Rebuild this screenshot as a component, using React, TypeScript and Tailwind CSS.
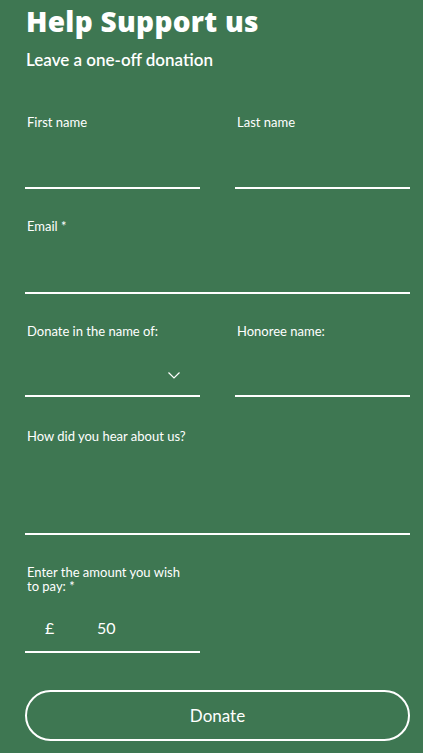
import React from "react";

const labelClass = "block pl-[2px] text-[13px] leading-4 text-white";
const lineInput =
  "block w-full bg-transparent border-0 border-b-2 border-white text-white outline-none";

function Field({
  label,
  height = "h-[59px]",
  children,
}: {
  label: string;
  height?: string;
  children?: React.ReactNode;
}) {
  return (
    <div className="flex flex-col">
      <label className={labelClass}>{label}</label>
      {children ?? <input type="text" className={`${lineInput} ${height}`} />}
    </div>
  );
}

export default function App() {
  return (
    <div
      className="min-h-screen bg-[#3e7752] pl-[26px] pr-[13px] pt-[3px] text-white"
      style={{ fontFamily: "Lato, 'Liberation Sans', sans-serif" }}
    >
      <h1
        className="text-[28px] font-extrabold leading-[36px] tracking-[0.3px]"
        style={{ fontFamily: "'Open Sans', 'Liberation Sans', sans-serif" }}
      >
        Help Support us
      </h1>
      <h2 className="mt-[10px] text-[17px] font-semibold leading-[22px]">
        Leave a one-off donation
      </h2>

      <form className="-ml-px mt-[43px] flex flex-col gap-[29px]">
        <div className="grid grid-cols-2 gap-[35px]">
          <Field label="First name" />
          <Field label="Last name" />
        </div>

        <Field label="Email *" height="h-[60px]" />

        <div className="grid grid-cols-2 gap-[35px]">
          <Field label="Donate in the name of:">
            <div className="relative h-[58px] border-b-2 border-white">
              <svg
                className="absolute right-[20px] top-[33px]"
                width="12"
                height="7"
                viewBox="0 0 12 7"
                fill="none"
              >
                <path d="M0.5 0.5 L6 6 L11.5 0.5" stroke="white" strokeWidth="1.2" />
              </svg>
            </div>
          </Field>
          <Field label="Honoree name:" height="h-[58px]" />
        </div>

        <div className="flex flex-col pt-[2px]">
          <label className={labelClass}>How did you hear about us?</label>
          <textarea className={`${lineInput} h-[91px] resize-none`} />
        </div>

        <div className="mt-[1px] w-[175px]">
          <label className="block max-w-[155px] pl-[2px] text-[13px] leading-[14px]">
            Enter the amount you wish to pay: *
          </label>
          <div className="mt-[23px] flex h-[37px] items-start border-b-2 border-white text-[16px]">
            <span className="ml-[20px] w-[52px]">£</span>
            <span>50</span>
          </div>
        </div>

        <button
          type="button"
          className="mt-[8px] h-[51px] w-full rounded-full border-2 border-white text-[17px]"
        >
          Donate
        </button>
      </form>
    </div>
  );
}
